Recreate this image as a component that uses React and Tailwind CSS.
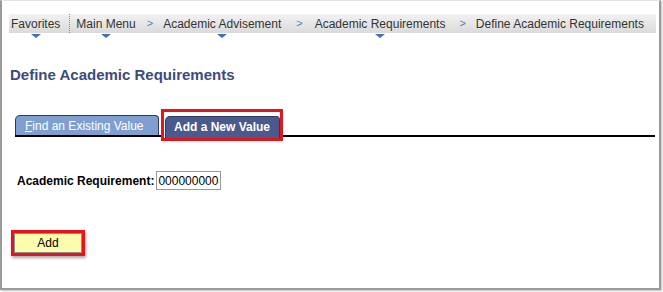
import React from 'react';

const Caret = () => (
  <span className="absolute left-1/2 -translate-x-1/2 bottom-[-5px] w-0 h-0 border-l-[5px] border-r-[5px] border-t-[4px] border-l-transparent border-r-transparent border-t-[#3f6fb5]" />
);

const NavItem = ({ label, caret, className = '' }) => (
  <span className={`relative whitespace-nowrap ${className}`}>
    {label}
    {caret && <Caret />}
  </span>
);

const Sep = ({ className = '' }) => (
  <span className={`text-[#5b7bb0] text-[11px] ${className}`}>&gt;</span>
);

export default function App() {
  return (
    <div className="w-[663px] h-[292px] bg-white overflow-hidden" style={{ fontFamily: '"Liberation Sans", Arial, sans-serif' }}>
      <div className="w-[661px] h-[290px] border-l-2 border-r-2 border-b-2 border-[#9a9a9a] border-t border-t-[#e4e4e4] shadow-[1px_1px_2px_rgba(0,0,0,0.25)] flex flex-col">
        {/* breadcrumb bar */}
        <div className="mt-[13px] ml-[7px] w-[647px] h-[19px] bg-gradient-to-b from-[#f2f2f2] to-[#dadada] flex items-center text-[12px] text-[#333] pl-[2px]">
          <NavItem label="Favorites" caret />
          <span className="ml-[9px] h-full border-l border-dotted border-[#8a8a8a]" />
          <NavItem label="Main Menu" caret className="ml-[6px]" />
          <Sep className="ml-[11px]" />
          <NavItem label="Academic Advisement" caret className="ml-[10px]" />
          <Sep className="ml-[15px]" />
          <NavItem label="Academic Requirements" caret className="ml-[12px]" />
          <Sep className="ml-[14px]" />
          <NavItem label="Define Academic Requirements" className="ml-[10px]" />
        </div>

        {/* page title */}
        <h1 className="mt-[33px] ml-[8px] text-[15px] font-bold text-[#3d4b7c] leading-[17px]">
          Define Academic Requirements
        </h1>

        {/* tabs */}
        <div className="mt-[32px] ml-[13px] mr-[4px] flex items-end border-b-2 border-black h-[22px]">
          <div className="w-[144px] h-[20px] bg-[#7f9fd0] border border-b-0 border-[#2c3a63] rounded-tl-[5px] rounded-tr-[4px] text-white text-[12px] flex items-center pl-[9px]">
            <span><span className="underline">F</span>ind an Existing Value</span>
          </div>
          <div className="ml-[2px] w-[122px] h-[32px] border-[3px] border-[#e3141c] bg-white flex justify-center pt-[4px] -mb-[6px]">
            <div className="w-[115px] h-[22px] bg-[#4b5a8c] border border-b-0 border-[#2c3a63] rounded-tl-[5px] rounded-tr-[4px] text-white text-[12px] font-bold flex items-center justify-center pb-[2px]">
              Add a New Value
            </div>
          </div>
        </div>

        {/* field */}
        <div className="mt-[34px] ml-[15px] flex items-center">
          <span className="text-[12px] font-bold text-black">Academic Requirement:</span>
          <span className="ml-[2px] w-[65px] h-[19px] border border-[#999] flex items-center pl-[1px] text-[12px] text-black">000000000</span>
        </div>

        {/* add button */}
        <div className="mt-[40px] ml-[9px] w-[74px] h-[26px] border-[3px] border-[#e3141c] shadow-[1px_2px_3px_rgba(0,0,0,0.35)] flex items-center justify-center">
          <div className="w-[68px] h-[20px] bg-[#fcfcae] border border-[#8f8f8f] text-[12px] text-black flex items-center justify-center">
            Add
          </div>
        </div>
      </div>
    </div>
  );
}
